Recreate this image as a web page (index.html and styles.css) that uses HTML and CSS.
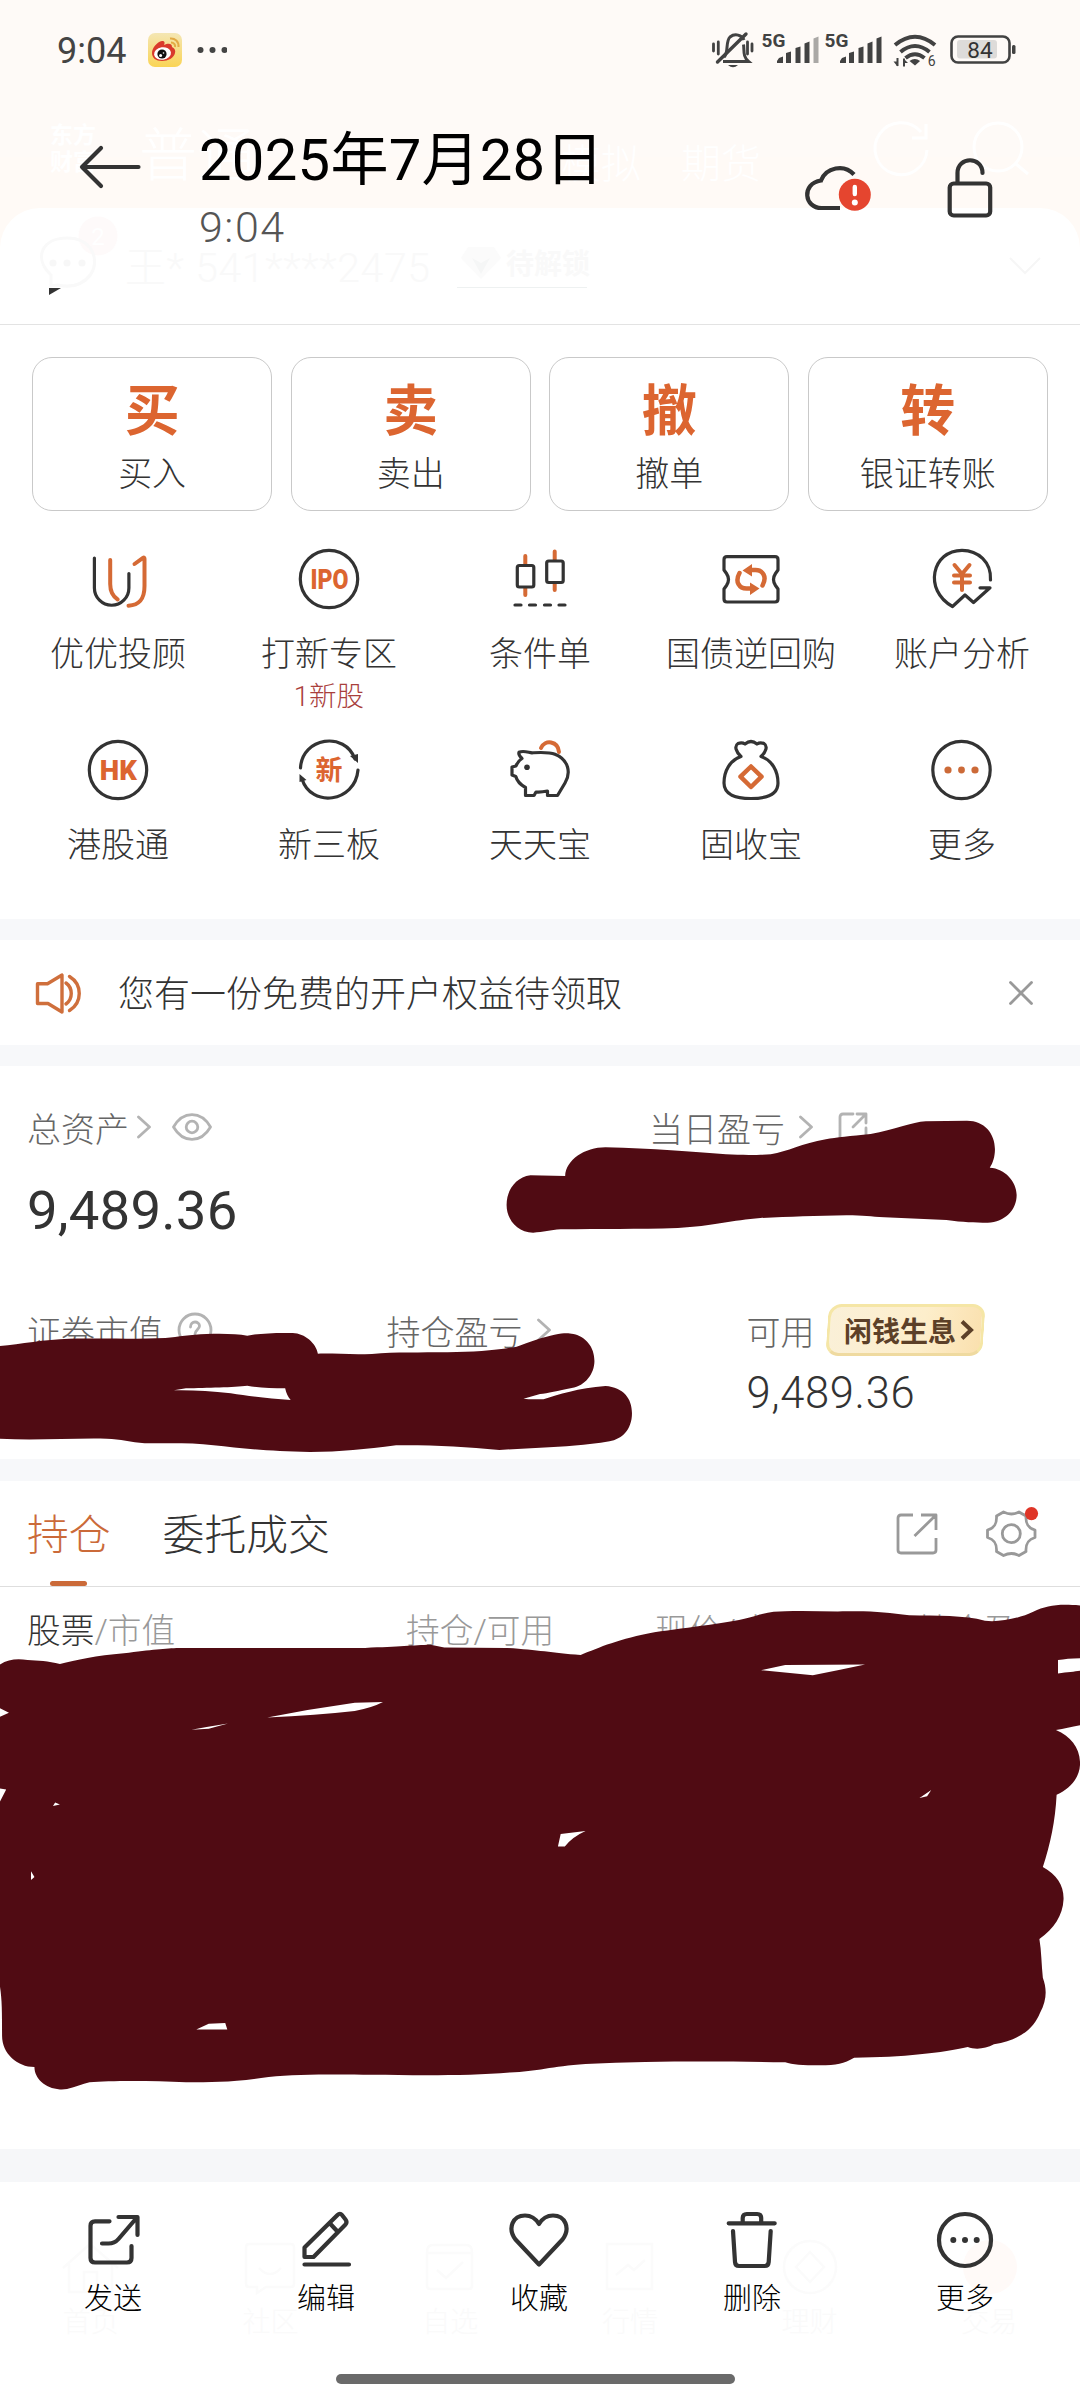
FILE: index.html
```html
<!DOCTYPE html>
<html lang="zh-CN">
<head>
<meta charset="utf-8">
<title>交易</title>
<link rel="stylesheet" href="styles.css">
</head>
<body>
<div class="screen">

  <header class="top">
    <div class="status">
      <span class="clock">9:04</span>
      <svg class="weibo" width="34" height="34" viewBox="0 0 34 34">
        <defs><linearGradient id="wb" x1="0" y1="0" x2="0" y2="1"><stop offset="0" stop-color="#f4e6b4"/><stop offset="1" stop-color="#fad455"/></linearGradient></defs>
        <rect width="34" height="34" rx="7" fill="url(#wb)"/>
        <path d="M4 20C4 15 9 9 14 8c3 0 3 2 2 4 4-2 8-2 8 2 2 1 4 3 3 6-1 5-7 8-13 8S4 25 4 20z" fill="#d93a2c"/>
        <ellipse cx="14.500" cy="20.500" rx="8.500" ry="6.300" fill="#fff" transform="rotate(-8 14.500 20.500)"/>
        <circle cx="14" cy="21" r="4.600" fill="#111"/><circle cx="12.600" cy="22.500" r="1.500" fill="#fff"/><circle cx="15.500" cy="20" r=".8" fill="#fff"/>
        <path d="M22 5.500c5-.5 9 3 8.500 8.500M23 9.500c3 0 4.500 2 4 4.500" fill="none" stroke="#e2aa45" stroke-width="2"/>
      </svg>
      <svg class="dots" width="30" height="8" viewBox="0 0 30 8" fill="#444"><circle cx="3.500" cy="4" r="3"/><circle cx="15.500" cy="4" r="3"/><circle cx="27.500" cy="4" r="3"/></svg>
      <svg class="indicators" width="306" height="40" viewBox="711 30 306 40" fill="none" stroke="#424242">
        <path d="M724 57c5-4 1-15 6-20 5-4 12-2 14 3M723 61.500h25.500c-6-5-4-11-5-17" stroke-width="3"/>
        <path d="M717.500 62 746 34" stroke-width="3.400" stroke-linecap="round"/>
        <path d="M728 65h10q-5 4.500-10 0z" fill="#424242" stroke="none"/>
        <path d="M713.500 44v7M718.300 42v12M752 44v7M747.500 42v12" stroke-width="2.800" stroke-linecap="round"/>
        <g fill="#424242" stroke="none">
          <text x="761.500" y="47" class="net">5G</text><text x="824.500" y="47" class="net">5G</text>
          <path d="M777 63v-2l2-3 4-1.500v6.500zM786 63V53l5-1.500V63zM795.500 63V48l5-1.500V63zM804.500 63V43.500l5-2V63z"/>
          <path d="M813.500 63V38.500l5-2V63z" fill="#aaa8a6"/>
          <path d="M840 63v-2l2-3 4-1.500v6.500zM849 63V53l5-1.500V63zM858.500 63V48l5-1.500V63zM867.500 63V43.500l5-2V63zM876.500 63V38.500l5-2V63z"/>
          <path d="M909.500 61q5.300-4 10.600 0L915 65.500z"/>
          <path d="M897.500 66v-8M904 58.500v8" stroke="#424242" stroke-width="2"/><path d="M893.500 61.500h4v5zM904 59l4 4h-4z"/>
          <text x="927.800" y="66" class="six">6</text>
        </g>
        <path d="M895 45q20-16.500 40 0M900.500 52q14.500-12 29 0M905.500 58q9.500-7.500 19 0" stroke-width="4"/>
        <rect x="957" y="40" width="40" height="18.500" rx="3" fill="#dddbd9" stroke="none"/>
        <rect x="951.500" y="36.500" width="58" height="26" rx="6.500" stroke-width="2.600"/>
        <rect x="1012" y="45" width="3.500" height="9" rx="1.500" fill="#424242" stroke="none"/>
        <text x="980" y="58" class="batt" fill="#333" stroke="none">84</text>
      </svg>
    </div>

    <div class="ghost ghost-brand">东方<br>财富</div>
    <div class="ghost ghost-title">普通</div>
    <div class="ghost ghost-tabs">模拟　期货</div>
    <svg class="ghost ghost-tools" width="170" height="60" viewBox="870 120 170 60" fill="none" stroke="#fff" stroke-width="3"><path d="M927 150a26 26 0 1 1-6-18M926 124v14h-14"/><circle cx="998" cy="147" r="24"/><path d="m1016 164 12 10"/></svg>
    <div class="ghost panel-top"></div>
    <svg class="ghost ghost-msg" width="82" height="80" viewBox="37 214 82 80" fill="none"><circle cx="98" cy="236" r="19.500" fill="#fefafa"/><path d="M51 286v-11c-18-17-9-37 16-37s33 22 24 36c-8 11-20 14-34 11z" stroke="#f9f9f9" stroke-width="3"/><g fill="#f7f7f7"><circle cx="53" cy="263" r="3.600"/><circle cx="67" cy="263" r="3.600"/><circle cx="82" cy="263" r="3.600"/></g><text x="98" y="245" class="ghost-num">2</text></svg>
    <div class="ghost ghost-account">王* 541****2475</div>
    <div class="ghost ghost-lock">待解锁</div>
    <svg class="ghost ghost-gem" width="42" height="34" viewBox="0 0 42 34"><path d="M8 1h26l7 11-20 21L1 12z" fill="#fbfbfb"/><path d="m12 12 9 16 9-16-9 5z" fill="#f5f6f6"/></svg>
    <div class="ghost ghost-rule"></div>
    <svg class="ghost ghost-down" width="34" height="20" viewBox="0 0 34 20" fill="none" stroke="#f6f6f6" stroke-width="2"><path d="m2 2 15 15L32 2"/></svg>

    <div class="viewer-bar">
      <svg class="back" width="62" height="46" viewBox="79 144 62 46" fill="none" stroke="#333" stroke-width="4.200" stroke-linecap="round" stroke-linejoin="round"><path d="M138.500 167H82M101 148 82 167l19 19"/></svg>
      <div class="when"><div class="date">2025年7月28日</div><div class="time">9:04</div></div>
      <svg class="cloud" width="70" height="50" viewBox="803 163 70 50"><path d="M854 174.500c-10-11-28-7-33 6-20 3-17 28 1 27.500h18" fill="none" stroke="#333" stroke-width="4.200"/><circle cx="854.800" cy="194.700" r="16" fill="#e5452f"/><path d="M854.800 187v7" stroke="#fff" stroke-width="4.400" stroke-linecap="round"/><circle cx="854.800" cy="202.500" r="3" fill="#fff"/></svg>
      <svg class="lock" width="48" height="62" viewBox="946 157 48 62" fill="none" stroke="#333" stroke-width="4.200" stroke-linecap="round"><rect x="949.700" y="183.500" width="40.500" height="32" rx="4"/><path d="M957.500 183v-10c0-17 25-17 25 0"/></svg>
    </div>
  </header>

  <div class="account-strip"><svg width="12" height="8" viewBox="0 0 12 8"><path d="M0 0h12L0 7z" fill="#333"/></svg></div>

  <section class="trade">
    <div class="actions">
      <div class="action"><b>买</b><span>买入</span></div>
      <div class="action"><b>卖</b><span>卖出</span></div>
      <div class="action"><b>撤</b><span>撤单</span></div>
      <div class="action"><b>转</b><span>银证转账</span></div>
    </div>
    <div class="shortcuts">
      <div class="cell">
        <svg class="ico" viewBox="0 0 70 70"><path d="M11.400 14v30a17 17 0 0 0 34.500 0V29.500"/><path class="o" d="M27.200 16v24c0 7 2 12 7.500 15.500M51.500 20 60 13.800q1.500-1 1.500 1V42c0 13-5 19-16 19.700"/></svg><span>优优投顾</span></div>
      <div class="cell">
        <svg class="ico" viewBox="0 0 70 70"><circle cx="35" cy="35" r="28.700"/><text x="35.500" y="44.500" textLength="38" lengthAdjust="spacingAndGlyphs" class="badge-text ipo">IPO</text></svg><span>打新专区</span><em>1新股</em></div>
      <div class="cell">
        <svg class="ico" viewBox="0 0 70 70"><path class="o" d="M20.300 12v9M20.300 44v7M49.700 7.500V16M49.700 39v7"/><rect x="12.300" y="21.500" width="16.500" height="21.500" rx="2"/><rect x="41.700" y="17" width="16.500" height="21.500" rx="2"/><path d="M10 61h6M24.500 61h6M39.500 61h6M54 61h6"/></svg><span>条件单</span></div>
      <div class="cell">
        <svg class="ico" viewBox="0 0 70 70"><path d="M11 12.700h48q3 0 3 3V26l-2.500 3.500q-4 6 0 12L62 45v10q0 3-3 3H11q-3 0-3-3V45l2.500-3.500q4-6 0-12L8 26V15.700q0-3 3-3z"/><path class="o thick" d="M23.500 29c-5 9 0 15.500 7 15.500h5M46.500 41.500c5-9 0-15.500-7-15.500h-5"/><path d="M26.500 26.500l9.500-6.500v12.500zM43.500 44.500l-9.500-6v12.500z" fill="#d56a35" stroke="none"/></svg><span>国债逆回购</span></div>
      <div class="cell">
        <svg class="ico" viewBox="0 0 70 70"><path d="M63.500 36C64.500 18 51 6.300 35 6.300 5 6.300-4 46 25.500 62.500L38 51 46.500 58.500 63 43.800H53"/><path class="o" d="m27.500 21 7.500 9 7.500-9M27 31.500h16M27 38.500h16M35 31v15"/></svg><span>账户分析</span></div>
      <div class="cell">
        <svg class="ico" viewBox="0 0 70 70"><circle cx="35" cy="35" r="28.700"/><text x="35.300" y="45" textLength="37" lengthAdjust="spacingAndGlyphs" class="badge-text">HK</text></svg><span>港股通</span></div>
      <div class="cell">
        <svg class="ico" viewBox="0 0 70 70"><path d="M6.500 33C8 2 51-4 61 24M64 35C61 68 17 73 8 44"/><path d="M56 21l8-2v9zM5.500 47V39l7 6z" fill="#333" stroke="none"/><text x="35" y="44.500" class="badge-text xin">新</text></svg><span>新三板</span></div>
      <div class="cell">
        <svg class="ico" viewBox="0 0 70 70"><path class="o" d="M36 13c4-9 17-7 18 4"/><path d="M14 17.300c4-2 9 0 13 .5 10-.5 17-1 23 1.500C64 25 66 38 60 48l-7.500 12.500h-10v-4.500q-7 1.500-11.500 1l-2 3.500H20.500v-8C16 50 12 46 10.800 41.500L7 40v-8l4-1q2-5 6-7.500-4-4-3-6.200z"/><circle cx="22" cy="32.300" r="2.800" fill="#333" stroke="none"/></svg><span>天天宝</span></div>
      <div class="cell">
        <svg class="ico" viewBox="0 0 70 70"><path d="M25 21.500C20 17 18 11 22 8.500q4-1.500 7 .5 6-5 12 0 3-2 7-.5c4 2.500 2 8.500-3 13C56 25 62 36 62 48c0 12-12 15.500-27 15.500S8 60 8 48c0-12 6-23 17-26.500z"/><path class="o thick" d="m35 31.500 10.500 10.200L35 52 24.500 41.700z"/></svg><span>固收宝</span></div>
      <div class="cell">
        <svg class="ico" viewBox="0 0 70 70"><circle cx="34.500" cy="35" r="28.700"/><g fill="#cc6a38" stroke="none"><circle cx="21" cy="35" r="3.600"/><circle cx="34.500" cy="35" r="3.400"/><circle cx="48" cy="35" r="3.600"/></g></svg><span>更多</span></div>
    </div>
  </section>

  <section class="notice">
    <svg class="speaker" width="48" height="42" viewBox="35 971 48 42" fill="none" stroke="#cf6f3c" stroke-width="3.400" stroke-linejoin="round" stroke-linecap="round"><path d="M37.500 982.700h10L62 974v37l-14-8.500H37.500zM66 982c7 5 7 16 0 21M69.500 975.500c13 8 13 26 0 34"/></svg>
    <span>您有一份免费的开户权益待领取</span>
    <svg class="close" width="24" height="24" viewBox="0 0 24 24" stroke="#999" stroke-width="2.800" stroke-linecap="round"><path d="m1.500 1.500 21 21M22.500 1.500l-21 21"/></svg>
  </section>

  <section class="assets">
    <div class="row labels">
      <div class="col total">总资产<svg class="chev" width="14" height="24" viewBox="0 0 14 24"><path d="m1.500 2 11 10-11 10"/></svg><svg class="eye" width="40" height="28" viewBox="0 0 40 28"><path d="M1.500 14C11-2.500 29-2.500 38.500 14 29 30.500 11 30.500 1.500 14z"/><circle cx="20" cy="14" r="5.800"/></svg></div>
      <div class="col day">当日盈亏<svg class="chev wide" width="14" height="24" viewBox="0 0 14 24"><path d="m1.500 2 11 10-11 10"/></svg><svg class="out" width="30" height="30" viewBox="0 0 30 30"><path d="M15 2H5Q2 2 2 5v20q0 3 3 3h20q3 0 3-3V16M19 2h9v9M28 2 15 15"/></svg></div>
    </div>
    <div class="amount">9,489.36</div>
    <div class="row details">
      <div class="col stock">证券市值<svg class="help" width="36" height="36" viewBox="0 0 36 36"><circle cx="18" cy="18" r="16"/><path d="M13.500 15c0-7 9-6 9-1 0 3-4.500 4-4.500 8"/></svg></div>
      <div class="col hold">持仓盈亏<svg class="chev wide" width="14" height="24" viewBox="0 0 14 24"><path d="m1.500 2 11 10-11 10"/></svg></div>
      <div class="col avail"><div class="avail-label">可用<div class="pill"><span>闲钱生息</span><svg width="14" height="20" viewBox="0 0 14 20" fill="none" stroke="#5c4028" stroke-width="4"><path d="m2 1.500 9 8.500-9 8.500"/></svg></div></div><div class="avail-amount">9,489.36</div></div>
    </div>
  </section>

  <section class="positions">
    <div class="tabs">
      <span class="tab active">持仓</span><span class="tab">委托成交</span>
      <svg class="share" width="42" height="42" viewBox="0 0 42 42"><path d="M17 2H5Q2 2 2 5v32q0 3 3 3h32q3 0 3-3V25M25 2h15v15M40 2 18.500 23"/></svg>
      <svg class="gear" width="54" height="58" viewBox="985 1505 54 58"><path d="M1003.500 1512q8 4 15.500 0l7 4c-.5 8 2 12 9 14v7.500c-7 2-9.500 6-9 14l-7 4q-7.500-4-15.500 0l-7-4c.5-8-2-12-9-14V1530c7-2 9.500-6 9-14z"/><circle cx="1011.300" cy="1533.700" r="9"/><circle cx="1031.500" cy="1513.600" r="6.600" fill="#df3527" stroke="none"/></svg>
    </div>
    <div class="thead"><span class="c1"><i>股票</i>/市值</span><span class="c2">持仓/可用</span><span class="c3">现价/成本</span><span class="c4">持仓盈亏</span></div>
  </section>

  <footer class="bottom">
    <svg class="ghost ghost-nav" width="960" height="60" viewBox="60 2237 960 60" fill="none" stroke="#fbfbfb" stroke-width="2.500"><path d="m63 2268 27-24 28 24M69 2264v28h43v-28M84 2292v-20h13v20M249 2244h42q3 0 3 3v37q0 3-3 3h-25l-9 6v-6h-8q-3 0-3-3v-37q0-3 3-3zM259 2268q11 12 22 0M427 2252q0-7 6-7h33q6 0 6 7v34q0 3-3 3h-39q-3 0-3-3zM427 2253h45M437 2270l9 8 17-16M607 2244h45v45h-45zM616 2275l12-10 6 5 11-10M810 2252l14 15-14 15-14-15z"/><circle cx="810" cy="2267" r="26"/><circle cx="990" cy="2267" r="27" fill="#fffaf8" stroke="none"/></svg>
    <div class="ghost ghost-names"><span>首页</span><span>社区</span><span>自选</span><span>行情</span><span>理财</span><span>交易</span></div>
    <div class="tools">
      <div class="tool"><svg viewBox="1.500 0 60 60"><path d="M28 11.300H13.500q-4.500 0-4.500 4.500V48q0 4.500 4.500 4.500H45.500q4.500 0 4.500-4.500V36M37 7h19v18M55 8 37 29q-4 4.500-10 4.500H20.500"/></svg><span>发送</span></div>
      <div class="tool"><svg viewBox="0 0 60 60"><path d="M8.500 54.500H53M8.500 37.500V47H17.500L49.500 14.500q2-2.500 0-5L46 5q-2-2.500-4.500 0zM34 13.500l7 7.500"/></svg><span>编辑</span></div>
      <div class="tool"><svg viewBox="0 0 60 60"><path d="M30 54.500 6.500 29.500C-2 18 4 5.500 16 5.500c6 0 11 3.500 14 8.500 3-5 8-8.500 14-8.500 12 0 18 12.500 9.500 24z"/></svg><span>收藏</span></div>
      <div class="tool"><svg viewBox="-.7 0 60 60"><path d="M6 13.300h46M20 12V8q0-4 4-4h10.500q4 0 4 4v4M10.300 21l2 31q.3 4 4 4H42q3.700 0 4-4l2-31"/></svg><span>删除</span></div>
      <div class="tool"><svg viewBox="0 0 60 60"><circle cx="30" cy="30" r="26"/><g fill="#333" stroke="none"><circle cx="18.300" cy="30" r="3"/><circle cx="30" cy="30" r="3"/><circle cx="41.700" cy="30" r="3"/></g></svg><span>更多</span></div>
    </div>
    <div class="home"></div>
  </footer>

  <svg class="ink" width="1080" height="2400" viewBox="0 0 1080 2400" fill="#500b13" fill-rule="evenodd">
    <path transform="translate(540 1060) scale(.3444 .3333)" d="M73 348L-28 346C-70 352-97 390-97 435C-97 480-65 518-20 518C10 516 30 510 60 508C180 506 280 508 400 504C500 498 560 480 640 474C720 470 800 468 890 466C940 466 960 470 1000 472L1180 480C1230 487 1260 488 1300 488C1350 486 1384 450 1384 405C1384 365 1350 325 1306 323C1315 310 1321 290 1321 268C1321 220 1290 182 1240 182L1120 184C1080 186 1030 210 960 222C900 228 860 232 830 238C760 250 720 275 670 283C640 285 590 286 540 283C440 276 330 265 190 262C130 262 75 300 73 348Z"/>
    <path transform="translate(0 1060) scale(.3444 .3333)" d="M0 858C60 852 130 838 200 836C300 835 400 838 480 834C520 830 550 824 600 822C650 820 690 822 718 827C750 820 800 818 850 819C885 820 918 850 923 881C980 880 1020 885 1080 882C1150 876 1220 878 1300 877C1380 876 1450 870 1500 860C1530 848 1580 830 1610 824C1640 818 1650 819 1665 822C1700 830 1726 860 1726 903C1726 940 1700 978 1660 984C1620 992 1590 1000 1568 1002L1520 1016C1540 1018 1560 1018 1578 1018C1620 1004 1680 984 1758 978C1810 982 1835 1015 1835 1060C1835 1110 1805 1138 1770 1144C1700 1156 1640 1160 1568 1163L1450 1170C1350 1160 1260 1155 1150 1156C1060 1168 990 1176 900 1176C780 1174 700 1165 620 1156C560 1148 500 1150 420 1150C380 1146 350 1137 310 1136C200 1134 100 1142 0 1136ZM505 991L540 985C600 983 680 982 718 977C750 983 790 985 828 985C831 1000 836 1010 844 1020C780 1016 720 1008 670 1000C610 993 560 990 505 991Z"/>
    <path transform="translate(0 1460) scale(.6888 .4464)" d="M0 458C12 446 25 445 40 448C55 449 70 450 87 457C110 448 140 438 180 433C220 425 240 422 260 421L530 421C580 418 600 415 625 414L645 420L735 421C780 425 800 432 843 437C870 420 900 400 950 386C1000 374 1060 366 1095 350C1110 342 1125 339 1140 339C1170 337 1200 340 1230 339C1270 338 1290 342 1320 348C1360 349 1400 348 1430 360C1450 364 1480 355 1500 340C1520 326 1535 322 1568 326L1568 444C1555 444 1545 446 1536 448L1536 478C1550 475 1560 474 1568 472L1568 594C1555 597 1545 602 1533 605C1555 620 1568 645 1568 680C1568 710 1555 735 1534 750C1532 810 1525 860 1514 912C1535 930 1545 955 1544 985C1543 1020 1530 1050 1509 1073C1512 1100 1512 1130 1514 1160C1520 1185 1520 1210 1510 1238C1500 1275 1480 1300 1443 1309C1430 1320 1415 1321 1405 1315C1370 1328 1310 1338 1240 1339C1225 1352 1215 1356 1190 1356C1165 1356 1150 1354 1140 1349C1040 1347 950 1346 850 1353C800 1358 780 1370 740 1372C680 1380 600 1378 540 1377C480 1376 430 1376 390 1382C340 1394 310 1394 270 1394C220 1390 160 1390 130 1394C105 1405 100 1411 87 1410C65 1408 50 1385 50 1360C25 1360 3 1330 3 1290C3 1240 3 1210 0 1180L0 765L9 738L0 736L0 575L13 566L0 556ZM1105 471L1140 459L1256 458Q1220 470 1180 482ZM388 577Q450 558 515 544L556 542Q540 555 515 562Q460 571 388 577ZM278 604L300 598 331 590 303 602ZM77 775L80 767L87 772ZM1335 757L1352 739L1346 753ZM810 866L814 838L850 831Q830 845 820 866ZM45 921L50 934L45 941ZM285 1276L303 1263L327 1261L330 1276Z"/>
  </svg>
</div>
</body>
</html>
```
FILE: styles.css
```css
* { box-sizing: border-box; }
body { margin: 0; background: #fff; color: #333; font-family: Roboto, "Noto Sans CJK SC", sans-serif; font-weight: 300; }
svg { display: block; flex: none; }
i, em { font-style: normal; }
.screen { position: relative; display: flex; flex-direction: column; width: 1080px; height: 2400px; overflow: hidden; }

.top { position: relative; height: 288px; background: linear-gradient(#fefaf7 0 157px, #fffaf6 157px 100%); }
.status { display: flex; align-items: center; height: 100px; padding: 0 63px 0 57px; }
.clock { width: 91px; padding-top: 1px; font-size: 36px; font-weight: 400; color: #444; }
.dots { margin-left: 15px; }
.indicators { margin-left: auto; }
.net { font: 700 19px Roboto, sans-serif; }
.six { font: 400 14px Roboto, sans-serif; }
.batt { font: 400 22.500px Roboto, sans-serif; text-anchor: middle; }

.ghost { position: absolute; color: #fff; white-space: nowrap; }
.ghost-brand { left: 50px; top: 122px; font-size: 23px; line-height: 27px; font-weight: 700; }
.ghost-title { left: 139px; top: 121px; font-size: 58px; line-height: 70px; }
.ghost-tabs { left: 561px; top: 140px; font-size: 40px; line-height: 50px; }
.ghost-tools { left: 870px; top: 120px; }
.panel-top { left: 0; top: 208px; width: 1080px; height: 80px; background: #fff; border-radius: 40px 40px 0 0; }
.ghost-msg { left: 37px; top: 214px; }
.ghost-num { font: 400 24px Roboto, sans-serif; fill: #fff; text-anchor: middle; }
.ghost-account { left: 125px; top: 245px; font-size: 41px; line-height: 46px; letter-spacing: .6px; color: #f9f9f9; }
.ghost-lock { left: 506px; top: 248px; font-size: 28px; line-height: 34px; font-weight: 700; color: #f9f9f9; }
.ghost-gem { left: 460px; top: 246px; }
.ghost-rule { left: 457px; top: 287px; width: 130px; height: 1px; background: #eef1f1; }
.ghost-down { left: 1008px; top: 256px; }

.viewer-bar { position: relative; display: flex; height: 188px; padding: 30px 86px 0 79px; }
.back { margin-top: 14px; }
.when { margin-left: 58px; }
.date { height: 56px; line-height: 60px; font-size: 58px; font-weight: 400; letter-spacing: .25px; color: #000; white-space: nowrap; }
.time { margin-top: 17px; height: 50px; line-height: 49px; font-size: 43px; letter-spacing: 1.500px; color: #555; }
.cloud { margin: 33px 0 0 auto; }
.lock { margin: 27px 0 0 73px; }
.account-strip { height: 37px; padding-left: 49px; border-bottom: 1px solid #e3e3e3; }

.trade { height: 594px; padding-top: 32px; }
.actions { display: grid; grid-template-columns: repeat(4, 1fr); gap: 18.300px; padding: 0 32px; }
.action { display: flex; flex-direction: column; align-items: center; height: 154px; padding-top: 21px; border: 1px solid #c9c9c9; border-radius: 20px; font-size: 34px; }
.action b { height: 64px; line-height: 64px; font-size: 55px; font-weight: 700; color: #dc6530; }
.action span { margin-top: 11px; line-height: 40px; }
.shortcuts { display: grid; grid-template-columns: repeat(5, 211px); grid-auto-rows: 191px; margin: 33px 0 0 12.500px; }
.cell { display: flex; flex-direction: column; align-items: center; font-size: 34px; }
.cell span { margin-top: 20px; line-height: 40px; }
.cell em { margin-top: 8px; line-height: 30px; font-size: 27.500px; color: #a9403c; }
.ico { width: 70px; height: 70px; fill: none; stroke: #333; stroke-width: 3.200; stroke-linecap: round; stroke-linejoin: round; }
.o { stroke: #d56a35; stroke-width: 4; }
.thick { stroke-width: 4.500; }
.badge-text { font: 900 27px Roboto, sans-serif; fill: #dc6530; stroke: none; text-anchor: middle; }
.xin { font: 700 27px "Noto Sans CJK SC", sans-serif; }

.notice { display: flex; align-items: center; height: 147px; padding: 0 47px 0 35px; border: solid #f7f8fa; border-width: 21px 0; font-size: 36px; }
.notice span { margin: -3px 0 0 35px; }
.close { margin-left: auto; }

.assets { height: 393px; color: #666; font-size: 34px; }
.chev, .eye, .out, .help { fill: none; stroke: #b3b3b3; stroke-width: 2.800; stroke-linecap: round; stroke-linejoin: round; }
.row { display: flex; }
.col { display: flex; align-items: center; height: 40px; white-space: nowrap; }
.labels { padding: 41px 0 0 27px; }
.total { width: 622px; }
.chev { margin-left: 8px; }
.chev.wide { margin-left: 14px; }
.eye { margin-left: 21px; }
.out { margin-left: 25px; }
.amount { margin: 31px 0 0 27px; height: 64px; line-height: 64px; font-size: 54.500px; font-weight: 400; letter-spacing: .2px; color: #333; }
.details { padding: 68px 0 0 27px; }
.stock { width: 359.500px; }
.hold { width: 360px; }
.help { margin-left: 14px; }
.avail { display: block; }
.avail-label { display: flex; align-items: center; height: 40px; }
.pill { display: flex; align-items: center; gap: 4px; width: 157px; height: 52px; margin-left: 12px; padding-left: 14px; border: 3px solid #f5e6a6; border-bottom-color: #efdaa0; border-radius: 13px; background: linear-gradient(100deg, #faf0d8, #fdeecb 60%, #fae0ae); color: #5c4028; font-size: 28px; font-weight: 700; transform: skewX(-4deg); }
.pill span, .pill svg { transform: skewX(4deg); }
.avail-amount { margin-top: 19px; height: 50px; line-height: 50px; font-size: 43.500px; letter-spacing: .65px; color: #333; }

.positions { position: relative; height: 690px; border-top: 22px solid #f7f8fa; }
.tabs { display: flex; align-items: center; height: 106px; padding: 0 41px 0 27px; border-bottom: 1px solid #dedede; font-size: 41.800px; }
.tab { position: relative; height: 105px; line-height: 109px; margin-right: 52px; }
.active { color: #cb6a39; }
.active::after { content: ""; position: absolute; left: 23px; bottom: 0; width: 37px; height: 5px; border-radius: 3px; background: #cb6a39; }
.share, .gear { fill: none; stroke: #999; stroke-width: 2.800; stroke-linejoin: round; }
.share { margin-left: auto; }
.gear { margin-left: 47px; }
.thead { display: grid; grid-template-columns: 379px 249px 200px 1fr; padding: 24px 28px 0 27px; line-height: 42px; font-size: 33.700px; color: #999; }
.thead i { color: #333; }
.c4 { text-align: right; }

.bottom { position: relative; height: 251px; border-top: 33px solid #f6f7f9; }
.ghost-nav { left: 60px; top: 55px; }
.ghost-names { left: 1px; top: 123px; display: grid; grid-template-columns: repeat(6, 179.700px); text-align: center; font-size: 28px; line-height: 36px; color: #fafafa; }
.tools { position: relative; display: grid; grid-template-columns: repeat(5, 213px); padding: 28px 0 0 6.500px; }
.tool { display: flex; flex-direction: column; align-items: center; font-size: 29px; color: #000; }
.tool svg { width: 60px; height: 60px; fill: none; stroke: #333; stroke-width: 4.200; stroke-linecap: round; stroke-linejoin: round; }
.tool span { margin-top: 11px; line-height: 36px; }
.home { width: 399px; height: 10px; margin: 57px 0 0 336px; border-radius: 5px; background: #6a6a6a; }
.ink { position: absolute; left: 0; top: 0; pointer-events: none; }
```
